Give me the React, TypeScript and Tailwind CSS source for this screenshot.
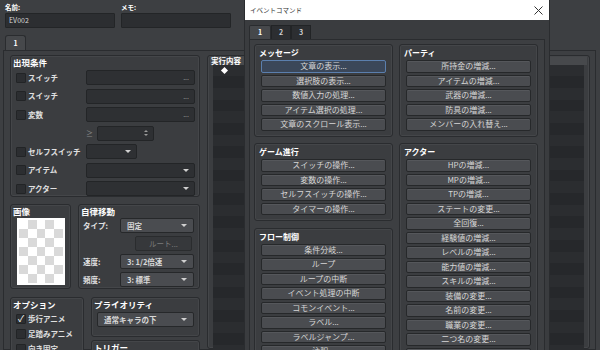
import React from "react";

const messageCmds = ["文章の表示...", "選択肢の表示...", "数値入力の処理...", "アイテム選択の処理...", "文章のスクロール表示..."];
const progressCmds = ["スイッチの操作...", "変数の操作...", "セルフスイッチの操作...", "タイマーの操作..."];
const flowCmds = ["条件分岐...", "ループ", "ループの中断", "イベント処理の中断", "コモンイベント...", "ラベル...", "ラベルジャンプ...", "注釈..."];
const partyCmds = ["所持金の増減...", "アイテムの増減...", "武器の増減...", "防具の増減...", "メンバーの入れ替え..."];
const actorCmds = [
  "HPの増減...",
  "MPの増減...",
  "TPの増減...",
  "ステートの変更...",
  "全回復...",
  "経験値の増減...",
  "レベルの増減...",
  "能力値の増減...",
  "スキルの増減...",
  "装備の変更...",
  "名前の変更...",
  "職業の変更...",
  "二つ名の変更...",
  "プロフィールの変更...",
];

const Caret = () => (
  <span className="h-0 w-0 border-x-[3px] border-t-[3px] border-x-transparent border-t-[#d0d0d0]" />
);

const Check = ({ checked }: { checked?: boolean }) => (
  <span className="flex h-[10px] w-[10px] shrink-0 items-center justify-center rounded-[1px] border border-[#222426] bg-[#2c2e31] text-[9px] leading-none text-white">
    {checked ? "✓" : ""}
  </span>
);

const Combo = ({ value, className = "" }: { value: string; className?: string }) => (
  <div
    className={`flex h-[15px] items-center justify-between rounded-[2px] border border-[#26282a] bg-[#4a4c50] pl-[6px] pr-[6px] text-[7.5px] font-bold leading-none text-[#d8d8d8] ${className}`}
  >
    <span>{value}</span>
    <Caret />
  </div>
);

const DarkField = ({ className = "", children }: { className?: string; children?: React.ReactNode }) => (
  <div
    className={`flex h-[15px] items-center justify-end rounded-[2px] border border-[#232527] bg-[#2e3033] pr-[5px] text-[7px] leading-none text-[#9a9a9a] ${className}`}
  >
    {children}
  </div>
);

const Box = ({ title, className = "", children }: { title: string; className?: string; children?: React.ReactNode }) => (
  <div className={`rounded-[3px] border border-[#2a2c2f] bg-[#3b3d40] shadow-[inset_0_0_0_1px_#444649] ${className}`}>
    <div className="flex h-[13px] items-center pl-[2px] text-[8.5px] font-bold leading-none text-white">{title}</div>
    {children}
  </div>
);

const CmdButton = ({ label, active }: { label: string; active?: boolean }) => (
  <div
    className={`flex h-[12.5px] items-center justify-center rounded-[2px] border text-[8px] leading-none text-[#d6d6d6] ${
      active ? "border-[#5b7fae] bg-[#3b4759]" : "border-[#26282a] bg-[#4a4c50] shadow-[inset_0_1px_0_#55575b]"
    }`}
  >
    {label}
  </div>
);

const CmdGroup = ({ title, items, first }: { title: string; items: string[]; first?: boolean }) => (
  <div className="rounded-[3px] border border-[#2a2c2f] bg-[#3b3d40] px-[6px] pb-[5px] pt-[1px] shadow-[inset_0_0_0_1px_#444649]">
    <div className="-ml-[2px] flex h-[14px] items-center text-[8px] font-bold leading-none text-white">{title}</div>
    <div className="flex flex-col gap-[2px]">
      {items.map((it, i) => (
        <CmdButton key={it} label={it} active={first && i === 0} />
      ))}
    </div>
  </div>
);

const condRows = [
  { label: "スイッチ", kind: "dots" },
  { label: "スイッチ", kind: "dots" },
  { label: "変数", kind: "dots" },
  { label: "", kind: "ge" },
  { label: "セルフスイッチ", kind: "self" },
  { label: "アイテム", kind: "drop" },
  { label: "アクター", kind: "drop" },
];

const EventCommandDialog = () => (
  <div className="absolute left-[244px] top-0 flex h-[350px] w-[306px] flex-col border-x border-[#2a2c2f] bg-[#3a3c3f]">
    <div className="flex h-[20px] shrink-0 items-center justify-between bg-white pl-[5px] pr-[6px]">
      <span className="text-[6.5px] leading-none text-[#333]">イベントコマンド</span>
      <svg width="9" height="9" viewBox="0 0 9 9">
        <path d="M0.5 0.5 L8.5 8.5 M8.5 0.5 L0.5 8.5" stroke="#333" strokeWidth="1" />
      </svg>
    </div>
    <div className="flex flex-1 flex-col px-[4px] pt-[5px]">
      <div className="flex h-[14px]">
        <div className="flex w-[22px] items-center justify-center rounded-t-[2px] border border-b-0 border-[#2a2c2f] bg-[#46484b] text-[7px] font-bold text-white">
          1
        </div>
        <div className="flex w-[20px] items-center justify-center border border-b-0 border-[#222426] bg-[#2c2e31] text-[7px] font-bold text-[#d0d0d0]">
          2
        </div>
        <div className="flex w-[20px] items-center justify-center border border-b-0 border-[#222426] bg-[#2c2e31] text-[7px] font-bold text-[#d0d0d0]">
          3
        </div>
      </div>
      <div className="grid flex-1 grid-cols-2 items-start gap-x-[6px] border border-[#2a2c2f] bg-[#3d3f42] pl-[4px] pr-[6px] pt-[4px]">
        <div className="flex flex-col gap-[6.5px]">
          <CmdGroup title="メッセージ" items={messageCmds} first />
          <CmdGroup title="ゲーム進行" items={progressCmds} />
          <CmdGroup title="フロー制御" items={flowCmds} />
        </div>
        <div className="flex flex-col gap-[6.5px]">
          <CmdGroup title="パーティ" items={partyCmds} />
          <CmdGroup title="アクター" items={actorCmds} />
        </div>
      </div>
    </div>
  </div>
);

export default function App() {
  return (
    <div className="relative h-[350px] w-[600px] overflow-hidden bg-[#3d3f42] font-['Noto_Sans_CJK_JP',sans-serif]">
      {/* event editor behind */}
      <div className="flex gap-[6px] pl-[5px] pt-[2px]">
        <div className="flex w-[110px] flex-col">
          <div className="flex h-[11px] items-center text-[6.5px] font-bold leading-none text-white">名前:</div>
          <div className="flex h-[15px] items-center rounded-[1px] border border-[#232527] bg-[#2c2e31] pl-[3px] text-[7px] leading-none text-[#d8d8d8]">
            EV002
          </div>
        </div>
        <div className="flex w-[110px] flex-col">
          <div className="flex h-[11px] items-center text-[6.5px] font-bold leading-none text-white">メモ:</div>
          <div className="h-[15px] rounded-[1px] border border-[#232527] bg-[#2c2e31]" />
        </div>
      </div>
      <div className="ml-[5px] mt-[7px] flex h-[15px] w-[21px] items-center justify-center rounded-t-[3px] border border-b-0 border-[#2a2c2f] bg-[#46484b] text-[7px] font-bold text-white">
        1
      </div>
      <div className="ml-[3px] flex h-[300px] w-[593px] gap-[7px] border border-[#2a2c2f] pl-[6px] pr-[5px] pt-[4px]">
        <div className="flex w-[190px] shrink-0 flex-col">
          <Box title="出現条件" className="h-[146px]">
            <div className="mt-[1px] flex flex-col gap-[3.5px] pl-[5px] pr-[4px]">
              {condRows.map((r, i) => (
                <div key={i} className="flex h-[15px] items-center">
                  <div className="flex w-[70px] shrink-0 items-center gap-[2px]">
                    {r.kind !== "ge" && <Check />}
                    {r.label && (
                      <span className="text-[7.5px] font-bold leading-none text-[#e0e0e0]">{r.label}</span>
                    )}
                  </div>
                  {r.kind === "dots" && <DarkField className="flex-1">...</DarkField>}
                  {r.kind === "drop" && (
                    <DarkField className="flex-1">
                      <Caret />
                    </DarkField>
                  )}
                  {r.kind === "self" && (
                    <DarkField className="w-[51px]">
                      <Caret />
                    </DarkField>
                  )}
                  {r.kind === "ge" && (
                    <>
                      <span className="w-[11px] text-[7px] leading-none text-[#8a8a8a]">≥</span>
                      <DarkField className="w-[57px]">
                        <span className="flex flex-col items-center gap-[2px]">
                          <span className="h-0 w-0 border-x-[2px] border-b-[2px] border-x-transparent border-b-[#9a9a9a]" />
                          <span className="h-0 w-0 border-x-[2px] border-t-[2px] border-x-transparent border-t-[#9a9a9a]" />
                        </span>
                      </DarkField>
                    </>
                  )}
                </div>
              ))}
            </div>
          </Box>

          <div className="mt-[7px] flex gap-[7px]">
            <Box title="画像" className="h-[85px] w-[61px]">
              <div className="ml-[6px] h-[67px] w-[48px] bg-white p-[2px]">
                <div className="grid h-full w-full grid-cols-5 grid-rows-7">
                  {Array.from({ length: 35 }).map((_, i) => (
                    <div key={i} className={(Math.floor(i / 5) + (i % 5)) % 2 === 0 ? "bg-white" : "bg-[#d9d9d9]"} />
                  ))}
                </div>
              </div>
            </Box>
            <Box title="自律移動" className="h-[85px] flex-1">
              <div className="flex flex-col gap-[3px] pl-[4px] pr-[5px]">
                <div className="flex items-center">
                  <span className="w-[37px] text-[7.5px] font-bold leading-none text-[#e0e0e0]">タイプ:</span>
                  <Combo value="固定" className="flex-1" />
                </div>
                <div className="ml-[52px] flex h-[15px] w-[57px] items-center justify-center rounded-[2px] border border-[#2a2c2e] bg-[#36383b] text-[7.5px] leading-none text-[#7c7c7c]">
                  ルート...
                </div>
                <div className="flex items-center">
                  <span className="w-[37px] text-[7.5px] font-bold leading-none text-[#e0e0e0]">速度:</span>
                  <Combo value="3: 1/2倍速" className="flex-1" />
                </div>
                <div className="flex items-center">
                  <span className="w-[37px] text-[7.5px] font-bold leading-none text-[#e0e0e0]">頻度:</span>
                  <Combo value="3: 標準" className="flex-1" />
                </div>
              </div>
            </Box>
          </div>

          <div className="mt-[8px] flex gap-[7px]">
            <Box title="オプション" className="h-[60px] w-[74px]">
              <div className="flex flex-col pl-[5px]">
                {[
                  ["歩行アニメ", true],
                  ["足踏みアニメ", false],
                  ["向き固定", false],
                ].map(([l, c]) => (
                  <div key={l as string} className="flex h-[15px] items-center gap-[2px]">
                    <Check checked={c as boolean} />
                    <span className="text-[7.5px] font-bold leading-none text-[#e0e0e0]">{l as string}</span>
                  </div>
                ))}
              </div>
            </Box>
            <div className="flex flex-1 flex-col gap-[3px]">
              <Box title="プライオリティ" className="h-[40px]">
                <div className="px-[5px] pt-[1px]">
                  <Combo value="通常キャラの下" className="h-[14px]" />
                </div>
              </Box>
              <Box title="トリガー" className="h-[40px]" />
            </div>
          </div>
        </div>

        <div className="flex flex-1 flex-col rounded-[3px] border border-[#2a2c2f] bg-[#3b3d40] px-[2px] pt-[1px] shadow-[inset_0_0_0_1px_#444649]">
          <div className="flex h-[13px] items-center bg-[#47494c] pl-[1px] text-[7.5px] font-bold leading-none text-white">
            実行内容
          </div>
          <div className="mx-[3px] flex flex-col">
            {Array.from({ length: 25 }).map((_, i) => (
              <div key={i} className={`flex h-[11.7px] items-center ${i % 2 === 0 ? "bg-[#2b2d30]" : "bg-[#26282b]"}`}>
                {i === 0 && <span className="ml-[9px] h-[5px] w-[5px] rotate-45 bg-white" />}
              </div>
            ))}
          </div>
        </div>
      </div>

      <EventCommandDialog />
    </div>
  );
}
